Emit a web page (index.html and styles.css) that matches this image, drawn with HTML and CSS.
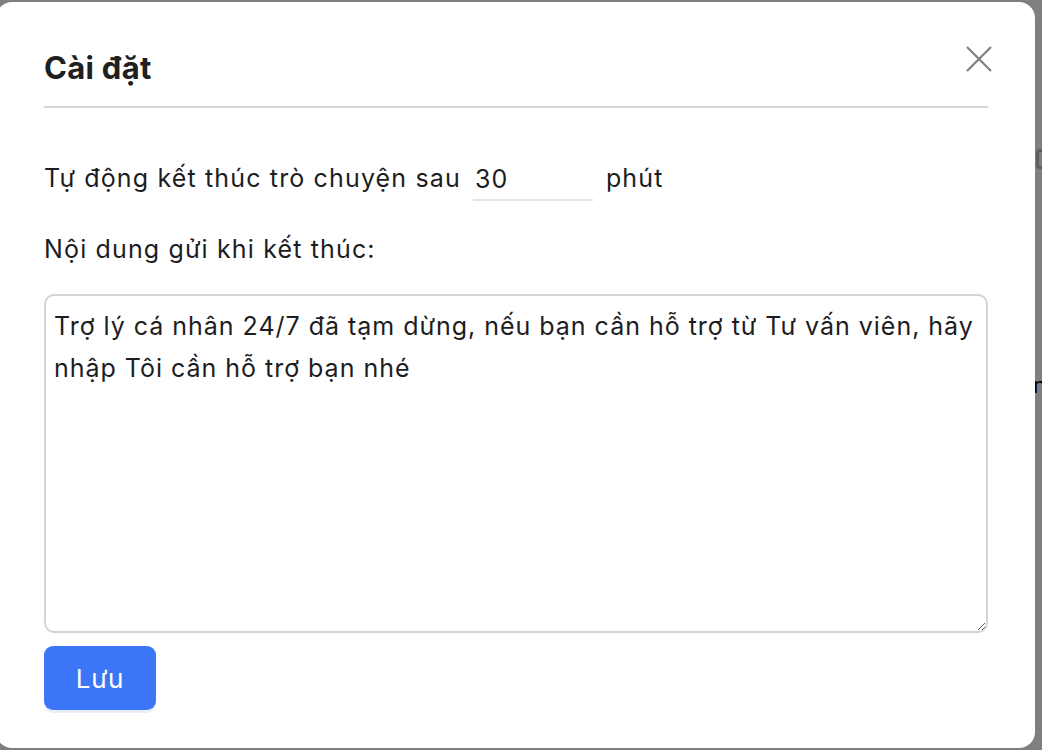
FILE: index.html
```html
<!DOCTYPE html>
<html lang="vi">
<head>
<meta charset="utf-8">
<title>Cài đặt</title>
<link rel="stylesheet" href="styles.css">
</head>
<body>
<div class="backdrop">
  <div class="behind-icon"></div>
  <div class="behind-text">nc</div>
</div>
<div class="modal">
  <div class="modal-header">
    <h2 class="modal-title">Cài đặt</h2>
    <button class="close-btn" aria-label="Đóng">
      <svg width="26" height="26" viewBox="0 0 26 26"><path d="M1 1 L25 25 M25 1 L1 25" stroke="#808080" stroke-width="2.2" fill="none"/></svg>
    </button>
  </div>
  <div class="modal-body">
    <div class="row">
      <span class="label">Tự động kết thúc trò chuyện sau</span>
      <input class="minutes" type="text" value="30">
      <span class="label">phút</span>
    </div>
    <div class="label block">Nội dung gửi khi kết thúc:</div>
    <textarea class="message">Trợ lý cá nhân 24/7 đã tạm dừng, nếu bạn cần hỗ trợ từ Tư vấn viên, hãy nhập Tôi cần hỗ trợ bạn nhé</textarea>
    <button class="save-btn">Lưu</button>
  </div>
</div>
</body>
</html>
```
FILE: styles.css
```css
html, body {
  margin: 0;
  padding: 0;
  height: 100%;
  overflow: hidden;
}
body {
  background: #7f7f7f;
  font-family: Inter, "Noto Sans", "Liberation Sans", sans-serif;
  color: #1d1d1f;
  position: relative;
}
.backdrop {
  position: absolute;
  inset: 0;
}
.behind-icon {
  position: absolute;
  left: 1036px;
  top: 149px;
  width: 18px;
  height: 20px;
  border: 3px solid #5f5f5f;
  border-radius: 4px;
  box-sizing: border-box;
}
.behind-text {
  position: absolute;
  left: 1033px;
  top: 372px;
  font-size: 22px;
  color: #000;
}
.modal {
  position: relative;
  top: 2px;
  margin-left: -4px;
  width: 1039px;
  height: 746px;
  background: #fff;
  border-radius: 16px;
  box-sizing: border-box;
  padding: 0 47px 0 48px;
}
.modal-header {
  display: flex;
  justify-content: space-between;
  align-items: flex-start;
  padding-top: 48px;
  height: 106px;
  box-sizing: border-box;
  border-bottom: 2px solid #d5d5dc;
}
.modal-title {
  margin: 0;
  font-size: 31px;
  line-height: 36px;
  font-weight: 700;
  letter-spacing: 0.3px;
  color: #202020;
}
.close-btn {
  border: 0;
  background: none;
  padding: 0;
  margin: -4px -4px 0 0;
  width: 26px;
  height: 26px;
  cursor: pointer;
}
.close-btn svg { display: block; }
.modal-body {
  padding-top: 47px;
}
.row {
  display: flex;
  align-items: center;
  height: 46px;
}
.label {
  font-size: 25px;
  line-height: 40px;
  letter-spacing: 1.15px;
}
.minutes {
  width: 120px;
  height: 46px;
  box-sizing: border-box;
  margin: 0 13px 0 12px;
  padding: 4px 0 0 2px;
  border: 0;
  border-bottom: 2px solid #e2e5f0;
  font: inherit;
  font-size: 25px;
  letter-spacing: 1.05px;
  color: #1d1d1f;
  outline: none;
}
.block {
  display: block;
  margin-top: 28px;
}
.message {
  display: block;
  box-sizing: border-box;
  width: 100%;
  height: 339px;
  margin-top: 25px;
  padding: 9px 4px 8px 8px;
  border: 2px solid #d4d4d8;
  border-radius: 10px;
  font: inherit;
  font-size: 25px;
  line-height: 42px;
  letter-spacing: 0.98px;
  color: #1d1d1f;
  outline: none;
  resize: vertical;
}
.save-btn {
  display: block;
  margin-top: 13px;
  width: 112px;
  height: 64px;
  border: 0;
  border-radius: 9px;
  background: #3b76f6;
  color: #fff;
  font: inherit;
  font-size: 26px;
  letter-spacing: 0.8px;
  box-shadow: 0 3px 0 #e8f0fe;
  cursor: pointer;
}
```
